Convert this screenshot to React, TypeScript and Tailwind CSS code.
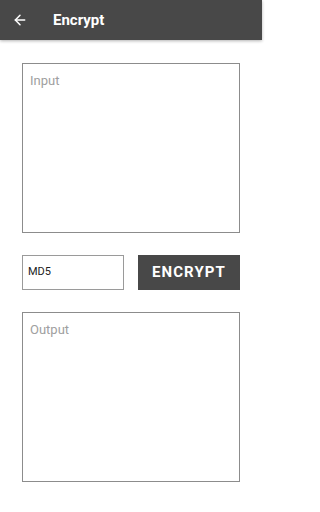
import { ArrowLeft } from 'lucide-react';

export default function App() {
  return (
    <div className="w-[262px] h-[512px] bg-white font-['Roboto','Liberation_Sans',sans-serif]">
      {/* App bar */}
      <div className="h-10 bg-[#484848] flex items-center shadow-[0_1px_3px_rgba(0,0,0,0.3)]">
        <ArrowLeft className="ml-[12px] w-4 h-4 text-white" strokeWidth={2.25} />
        <span className="ml-[25px] text-[15px] font-bold text-white">Encrypt</span>
      </div>

      <div className="px-[22px] pt-[23px] flex flex-col gap-[22px]">
        {/* Input */}
        <div className="h-[170px] border border-[#8c8c8c] px-[7px] pt-[4px]">
          <span className="text-[13px] text-[#a0a0a0]">Input</span>
        </div>

        {/* Algorithm + button */}
        <div className="grid grid-cols-2 gap-[14px] h-[35px]">
          <div className="border border-[#9a9a9a] flex items-center px-[5px]">
            <span className="text-[11px] text-[#222]">MD5</span>
          </div>
          <button className="bg-[#484848] text-white text-[15px] font-bold tracking-[1.1px] flex items-center justify-center">
            ENCRYPT
          </button>
        </div>

        {/* Output */}
        <div className="h-[170px] border border-[#8c8c8c] px-[7px] pt-[4px]">
          <span className="text-[13px] text-[#a0a0a0]">Output</span>
        </div>
      </div>
    </div>
  );
}
